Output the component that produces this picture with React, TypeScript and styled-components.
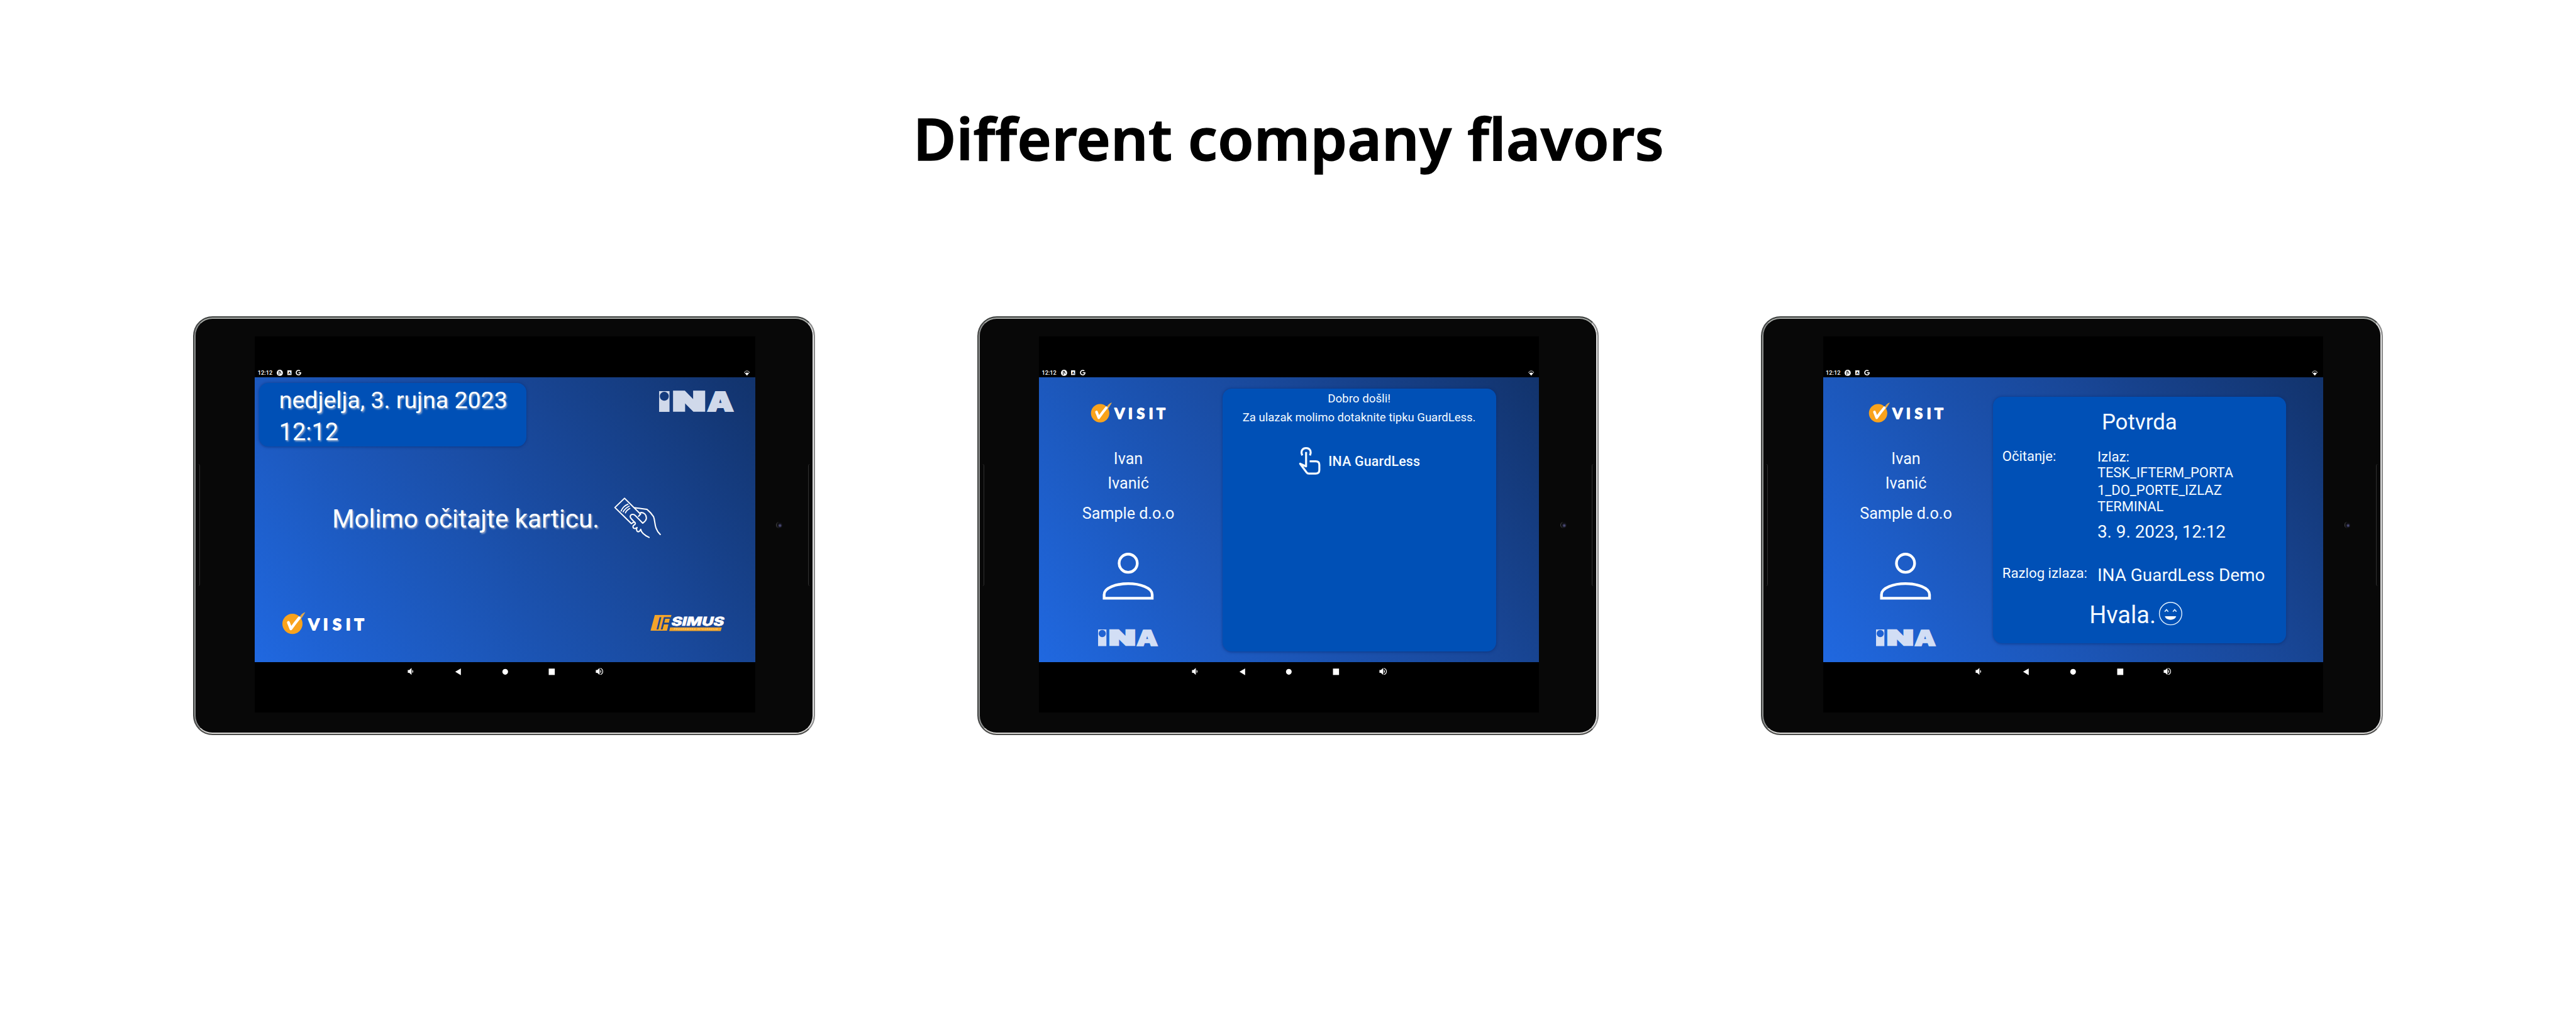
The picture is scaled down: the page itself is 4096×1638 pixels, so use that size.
import React from 'react';
import styled, { createGlobalStyle, css } from 'styled-components';
import { FaGoogle } from 'react-icons/fa';

/* Design units are authored on a 5000-wide board and scaled to the page. */
const u = (n: number) => `${+(n * 0.8192).toFixed(3)}px`;

const Global = createGlobalStyle`
  html, body { margin: 0; background: #fff; }
  * { box-sizing: border-box; }
`;

const Board = styled.main`
  width: ${u(5000)};
  height: ${u(2000)};
  overflow: hidden;
  background: #fff;
  display: flex;
  flex-direction: column;
  align-items: center;
  padding-top: ${u(207)};
`;

const Title = styled.h1`
  margin: 0 0 ${u(287.5)};
  font: 600 ${u(113.4)} / ${u(120)} 'Noto Sans', sans-serif;
  letter-spacing: ${u(0.65)};
  -webkit-text-stroke: ${u(2)} #000;
  font-variant-ligatures: none;
  color: #000;
  padding-left: ${u(3)};
  white-space: nowrap;
`;

const Devices = styled.section`
  display: flex;
  gap: ${u(315.1)};
`;

const Frame = styled.article`
  position: relative;
  width: ${u(1206.7)};
  height: ${u(812.2)};
  border-radius: ${u(38)};
  border: ${u(3)} solid;
  border-color: #3a3d3c #8a8a8a #4b4b49 #444645;
  background: #080808;
  display: flex;
  align-items: flex-start;
  padding: ${u(36.5)} 0 0 ${u(117.5)};
  &::before {
    content: '';
    position: absolute;
    inset: 0;
    border-radius: ${u(35)};
    border: ${u(3)} solid;
    border-color: #a9aca8 #e4e4e4 #dcdbd8 #8f9190;
  }
`;

const SideKey = styled.i<{ $right?: boolean }>`
  position: absolute;
  top: ${u(284)};
  height: ${u(237)};
  width: ${u(8)};
  ${(p) =>
    p.$right
      ? css`right: ${u(3)}; border-left: ${u(1.6)} solid #303030; border-radius: ${u(4)} 0 0 ${u(4)};`
      : css`left: ${u(3)}; border-right: ${u(1.6)} solid #303030; border-radius: 0 ${u(4)} ${u(4)} 0;`}
`;

const Display = styled.div`
  width: ${u(971)};
  height: ${u(729.5)};
  background: #000;
  display: flex;
  flex-direction: column;
`;

const Camera = styled.i`
  margin: ${u(360)} 0 0 ${u(41)};
  width: ${u(12)};
  height: ${u(12)};
  border-radius: 50%;
  background: radial-gradient(circle at 58% 58%, #4b4b78 0 12%, #15151d 38%, #0b0b0d 60%);
  border-left: ${u(1.6)} solid #4c4c4c;
`;

const StatusBar = styled.header`
  height: ${u(79.5)};
  padding: 0 ${u(10.3)} ${u(2)} ${u(5.4)};
  display: flex;
  align-items: flex-end;
  justify-content: space-between;
  color: #fff;
`;

const StatusGroup = styled.div`
  display: flex;
  align-items: center;
  gap: ${u(8.4)};
  height: ${u(14)};
  font: 500 ${u(11.3)} / ${u(14)} Roboto, sans-serif;
`;

const NavBar = styled.footer`
  height: ${u(37)};
  display: grid;
  grid-template-columns: repeat(5, ${u(91.1)});
  justify-content: center;
  align-items: center;
  justify-items: center;
`;

const Kiosk = styled.div<{ $row?: boolean }>`
  height: ${u(552.5)};
  display: flex;
  flex-direction: ${(p) => (p.$row ? 'row' : 'column')};
  background: linear-gradient(52deg, #2068e0 0%, #1c57ba 33%, #19489a 62%, #12336c 100%);
  color: #f4fbff;
  font-family: Roboto, sans-serif;
`;

const Line = styled.div<{ $size: number; $lh: number; $top?: number; $weight?: number; $track?: number }>`
  font-size: ${(p) => u(p.$size)};
  line-height: ${(p) => u(p.$lh)};
  margin-top: ${(p) => u(p.$top ?? 0)};
  font-weight: ${(p) => p.$weight ?? 400};
  letter-spacing: ${(p) => u(p.$track ?? 0)};
  white-space: nowrap;
`;

const Glow = styled(Line)`
  color: #fff;
  text-shadow: ${u(2.2)} ${u(2.2)} ${u(3)} rgba(205, 208, 214, 0.65);
`;

const Card = styled.section`
  background: #0050b6;
  border-radius: ${u(18)};
  box-shadow: 0 ${u(1)} ${u(5)} rgba(6, 40, 110, 0.6);
`;

const TopRow = styled.div`
  display: flex;
  justify-content: space-between;
  align-items: flex-start;
  height: ${u(133.5)};
  padding: ${u(10)} ${u(41.2)} 0 ${u(8)};
`;

const LogoSlot = styled.div`
  margin-top: ${u(16.2)};
`;

const DateCard = styled(Card)`
  width: ${u(518.6)};
  height: ${u(123.5)};
  padding: ${u(2.4)} 0 0 ${u(38.8)};
`;

const PromptRow = styled.div`
  display: flex;
  align-items: flex-start;
  gap: ${u(16.3)};
  margin: ${u(88)} 0 0 ${u(150)};
`;

const BottomRow = styled.div`
  display: flex;
  align-items: center;
  justify-content: space-between;
  margin-top: auto;
  padding: 0 ${u(46)} ${u(46)} ${u(50)};
`;

const Visitor = styled.aside<{ $width: number }>`
  width: ${(p) => u(p.$width)};
  display: flex;
  flex-direction: column;
  align-items: center;
  padding-top: ${u(45.2)};
`;

const Gap = styled.div<{ $top: number; $left?: number }>`
  margin-top: ${(p) => u(p.$top)};
  padding-left: ${(p) => u(p.$left ?? 0)};
  line-height: 0;
`;

const WelcomeCard = styled(Card)`
  width: ${u(531)};
  height: ${u(510.3)};
  margin: ${u(21.2)} 0 0 ${u(9.2)};
  padding-top: ${u(3.8)};
  display: flex;
  flex-direction: column;
  align-items: center;
`;

const TapButton = styled.div`
  display: flex;
  align-items: center;
  gap: ${u(13)};
  margin-top: ${u(38.5)};
`;

const ConfirmCard = styled(Card)`
  width: ${u(569)};
  height: ${u(478.7)};
  margin: ${u(36.8)} 0 0 ${u(8.3)};
  padding: ${u(25.2)} 0 0 ${u(17.9)};
`;

const Heading = styled(Line)`
  text-align: center;
  padding-right: ${u(19)};
`;

const Field = styled.div<{ $top: number }>`
  display: grid;
  grid-template-columns: ${u(184.4)} 1fr;
  margin-top: ${(p) => u(p.$top)};
`;

const Thanks = styled.div`
  display: flex;
  gap: ${u(5)};
  margin: ${u(29.4)} 0 0 ${u(168.8)};
`;

const Svg = styled.svg`
  display: block;
  flex: none;
  overflow: visible;
`;

const box = (w: number, h: number, k = 1) => ({
  width: w * k * 0.8192,
  height: h * k * 0.8192,
  viewBox: `0 0 ${w} ${h}`,
});

const VisitLogo = ({ scale = 1 }: { scale?: number }) => (
  <Svg {...box(170, 50, scale)} fill="none">
    <circle cx="23.2" cy="27" r="19.6" fill="#f9a31c" />
    <path d="M35.6 16.5C39 10 42 6 48.3 4.2C45.8 8.3 43 13 39.3 18.4Z" fill="#e0a84a" />
    <path d="M15.4 24.4L20.2 36.6Q28 25.6 36.4 15.4" stroke="#fff" strokeWidth="5.6" strokeLinecap="round" strokeLinejoin="round" />
    <text
      x="64.8 87.7 109.7 131.7 152.8"
      y="38.9"
      textAnchor="middle"
      fontFamily="Lato, sans-serif"
      fontWeight="700"
      fontSize="31"
      fill="#fff"
      stroke="#fff"
      strokeWidth="2.2"
      strokeLinejoin="round"
    >
      VISIT
    </text>
  </Svg>
);

const InaLogo = ({ scale = 1, fill = '#d0d9ea' }: { scale?: number; fill?: string }) => (
  <Svg {...box(145.6, 40.3, scale)} fill={fill}>
    <path fillRule="evenodd" d="M0 0H20.2V40.3H0ZM10.1 1.2a8.7 8.7 0 1 0 .01 0Z" />
    <g fontFamily="Inter, sans-serif" fontWeight="900" stroke={fill}>
      <text x="26.6" y="38.3" fontSize="50" strokeWidth="4" textLength="63.5" lengthAdjust="spacingAndGlyphs">N</text>
      <text x="93.3" y="39.05" fontSize="52" strokeWidth="2.5" textLength="51.4" lengthAdjust="spacingAndGlyphs">A</text>
    </g>
  </Svg>
);

const SimusLogo = () => (
  <Svg {...box(170, 60)}>
    <g transform="scale(.3333)">
      <path d="M63 44H160L154 66H150L134 136H38Z" fill="#f2a429" />
      <path d="M152 116H453L447 137H147Z" fill="#f2a429" />
      <g transform="skewX(-14)" fontFamily="Inter, sans-serif">
        <text x="97" y="128" fontSize="98" fontWeight="500" fill="#19458f" textLength="78" lengthAdjust="spacingAndGlyphs">IF</text>
        <text x="182" y="106" fontSize="71" fontWeight="800" fill="#fff" stroke="#fff" strokeWidth="2.5" textLength="306" lengthAdjust="spacingAndGlyphs">SIMUS</text>
        <text x="206" y="133" fontSize="16" fontWeight="500" fill="#fbcf80" textLength="256">PROGRAMSKA INTEGRACIJA</text>
      </g>
    </g>
  </Svg>
);

const CardHandIcon = () => (
  <Svg {...box(120, 100)} fill="none" stroke="#fff" strokeLinecap="round" strokeLinejoin="round">
    <g transform="scale(.3333)" strokeWidth="7.5">
      <path d="M192 130L99 38L43 92L139 186L152 177" />
      <path d="M79 112Q91 84 119 73M91 117Q101 97 126 84M104 123Q111 107 130 97" strokeWidth="6.5" />
      <path d="M192 130L181 143M192 122C212 118 228 135 226 156C224 170 214 176 205 183L164 141C154 129 140 129 134 138C129 147 134 154 142 161L158 178" />
      <path d="M158 178C166 185 161 191 154 195C147 199 146 208 153 213C160 217 165 213 172 209M172 209C166 219 170 231 178 233C186 234 190 226 193 219C197 238 220 256 242 266" />
      <path d="M160 93C186 98 207 98 230 103C246 116 258 130 268 145C280 174 269 212 307 249" />
    </g>
  </Svg>
);

const TapIcon = () => (
  <Svg {...box(46, 58)} fill="none" stroke="#f4fbff" strokeWidth="3.9" strokeLinejoin="round">
    <path d="M8.2 18.6C4.6 11 8 4.4 15.6 4.4S26.6 11 23 18.6" />
    <path d="M15.6 12V40L4 34.8L16.5 51.5Q18.2 53.8 21 53.8H34Q41.3 53.8 41.3 47V37Q41.3 30 34.5 30H22.5" />
  </Svg>
);

const PersonIcon = () => (
  <Svg {...box(110, 98)} fill="none" stroke="#fff" strokeWidth="5.3">
    <circle cx="54.8" cy="24" r="17.6" />
    <path d="M8.1 92V85C8.1 71.5 32 63.7 54.8 63.7S101.4 71.5 101.4 85V92Z" />
  </Svg>
);

const SmileIcon = () => (
  <Svg {...box(48, 48)} fill="none" stroke="#e4f3ff">
    <circle cx="23.7" cy="24.2" r="21.8" strokeWidth="1.7" />
    <path d="M12.3 20.5L15.7 16.4L19.1 20.5M28.2 20.5L31.6 16.4L35 20.5" strokeWidth="2" />
    <path d="M12.5 29.4H34.5C32 38.6 15 38.6 12.5 29.4Z" fill="#fff" stroke="none" />
  </Svg>
);

const PIcon = () => (
  <Svg {...box(12, 12)}>
    <circle cx="6" cy="6" r="6" fill="#fff" />
    <path d="M4.4 10V2.8H6.8V6.4H9.4" stroke="#000" strokeWidth="1.2" fill="none" />
  </Svg>
);

const ABadge = () => (
  <Svg {...box(8, 9)}>
    <rect width="8" height="9" fill="#fff" />
    <text x="4" y="7.2" textAnchor="middle" fontFamily="Roboto, sans-serif" fontWeight="700" fontSize="7.5">A</text>
  </Svg>
);

const WifiIcon = () => (
  <Svg {...box(11.4, 10)}>
    <path d="M5.7 9.6L.7 3.6Q5.7 -1.6 10.7 3.6Z" fill="none" stroke="#fff" strokeWidth="1" />
    <path d="M5.7 10L2.5 5.6Q5.7 2.9 8.9 5.6Z" fill="#fff" />
  </Svg>
);

const Speaker = ({ loud }: { loud?: boolean }) => (
  <Svg {...box(14, 14)} fill="#fff">
    <path d="M.5 4.2H3.3L7.8 .3V13.7L3.3 9.8H.5Z" />
    <path d="M9.3 3.6Q13 7 9.3 10.4Z" />
    {loud && <path d="M9.3 .9C15.6 3 15.6 11 9.3 13.1" fill="none" stroke="#fff" strokeWidth="1.4" />}
  </Svg>
);

const NavShape = ({ d }: { d: string }) => (
  <Svg {...box(13, 13)} fill="#fff">
    <path d={d} />
  </Svg>
);

const Tablet = ({ children }: { children: React.ReactNode }) => (
  <Frame>
    <SideKey />
    <SideKey $right />
    <Display>
      <StatusBar>
        <StatusGroup>
          <span>12:12</span>
          <PIcon />
          <ABadge />
          <FaGoogle size={u(11.2)} />
        </StatusGroup>
        <StatusGroup>
          <WifiIcon />
        </StatusGroup>
      </StatusBar>
      {children}
      <NavBar>
        <Speaker />
        <NavShape d="M1 6.5L12 0V13Z" />
        <NavShape d="M6.5 .9a5.5 5.6 0 1 0 .01 0Z" />
        <NavShape d="M.6 .3H12.4V12.7H.6Z" />
        <Speaker loud />
      </NavBar>
    </Display>
    <Camera />
  </Frame>
);

const VisitorPanel = ({ width }: { width: number }) => (
  <Visitor $width={width}>
    <Gap $top={0} $left={4}>
      <VisitLogo scale={0.91} />
    </Gap>
    <Line $size={30.7} $lh={40} $top={47.8}>Ivan</Line>
    <Line $size={30.7} $lh={40} $top={7.3}>Ivanić</Line>
    <Line $size={30.7} $lh={40} $top={19.7}>Sample d.o.o</Line>
    <Gap $top={51}>
      <PersonIcon />
    </Gap>
    <Gap $top={54.7}>
      <InaLogo scale={0.803} fill="#d2def5" />
    </Gap>
  </Visitor>
);

export default function App() {
  return (
    <>
      <Global />
      <Board>
        <Title>Different company flavors</Title>
        <Devices>
          <Tablet>
            <Kiosk>
              <TopRow>
                <DateCard>
                  <Glow $size={45.8} $lh={62.3}>nedjelja, 3. rujna 2023</Glow>
                  <Glow $size={46.3} $lh={62.3}>12:12</Glow>
                </DateCard>
                <LogoSlot>
                  <InaLogo />
                </LogoSlot>
              </TopRow>
              <PromptRow>
                <Glow $size={49.4} $lh={60} $top={23.1}>Molimo očitajte karticu.</Glow>
                <CardHandIcon />
              </PromptRow>
              <BottomRow>
                <VisitLogo />
                <SimusLogo />
              </BottomRow>
            </Kiosk>
          </Tablet>

          <Tablet>
            <Kiosk $row>
              <VisitorPanel width={346.8} />
              <WelcomeCard>
                <Line $size={22.9} $lh={32}>Dobro došli!</Line>
                <Line $size={22.6} $lh={32} $top={5}>Za ulazak molimo dotaknite tipku GuardLess.</Line>
                <TapButton>
                  <TapIcon />
                  <Line $size={26} $lh={32} $top={4.6} $weight={500} $track={0.3}>INA GuardLess</Line>
                </TapButton>
              </WelcomeCard>
            </Kiosk>
          </Tablet>

          <Tablet>
            <Kiosk $row>
              <VisitorPanel width={322} />
              <ConfirmCard>
                <Heading $size={42.5} $lh={50}>Potvrda</Heading>
                <Field $top={25.7}>
                  <Line $size={26.8} $lh={32}>Očitanje:</Line>
                  <div>
                    <Line $size={27.2} $lh={30} $top={1}>Izlaz:</Line>
                    <Line $size={26.7} $lh={32}>TESK_IFTERM_PORTA</Line>
                    <Line $size={26.9} $lh={37.6}>1_DO_PORTE_IZLAZ</Line>
                    <Line $size={26.6} $lh={25.6}>TERMINAL</Line>
                    <Line $size={34} $lh={40} $top={16.5}>3. 9. 2023, 12:12</Line>
                  </div>
                </Field>
                <Field $top={42.5}>
                  <Line $size={27.1} $lh={32}>Razlog izlaza:</Line>
                  <Line $size={34.1} $lh={40} $top={1.7}>INA GuardLess Demo</Line>
                </Field>
                <Thanks>
                  <Line $size={46.4} $lh={54}>Hvala.</Line>
                  <SmileIcon />
                </Thanks>
              </ConfirmCard>
            </Kiosk>
          </Tablet>
        </Devices>
      </Board>
    </>
  );
}
